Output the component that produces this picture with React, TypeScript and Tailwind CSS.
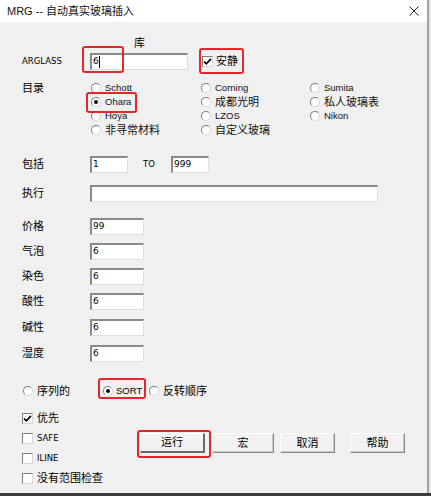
import React from "react";

function Radio({ checked = false }: { checked?: boolean }) {
  return (
    <span className="w-[10px] h-[10px] shrink-0 rounded-full bg-white border border-t-[#7c7c7c] border-l-[#7c7c7c] border-r-[#d6d6d6] border-b-[#d6d6d6] flex items-center justify-center">
      {checked && <span className="w-[4px] h-[4px] rounded-full bg-black" />}
    </span>
  );
}

function Check({ checked = false }: { checked?: boolean }) {
  return (
    <span className="w-[11px] h-[11px] shrink-0 bg-white border border-t-[#7c7c7c] border-l-[#7c7c7c] border-r-[#d6d6d6] border-b-[#d6d6d6] flex items-center justify-center">
      {checked && (
        <svg width="9" height="9" viewBox="0 0 9 9">
          <path d="M1 4.5 L3.3 6.8 L8 1.8" fill="none" stroke="#000" strokeWidth="1.7" />
        </svg>
      )}
    </span>
  );
}

function Field({ w, value = "", caret = false }: { w: string; value?: string; caret?: boolean }) {
  return (
    <div
      className={`${w} h-[17px] shrink-0 bg-white border-t-2 border-l-2 border-r border-b border-t-[#8a8a8a] border-l-[#8a8a8a] border-r-[#dedede] border-b-[#dedede] flex items-center pl-[1px] text-[9px] text-black [font-family:'DejaVu_Sans',sans-serif]`}
    >
      <span>{value}</span>
      {caret && <span className="w-[1px] h-[12px] bg-black" />}
    </div>
  );
}

function RadioItem({ label, checked = false, latin = false }: { label: string; checked?: boolean; latin?: boolean }) {
  return (
    <div className="h-[14px] flex items-center">
      <Radio checked={checked} />
      <span className={`ml-[4px] text-[#111] ${latin ? "text-[9.5px]" : "text-[11px]"}`}>{label}</span>
    </div>
  );
}

function ValueRow({ label, value, mt }: { label: string; value: string; mt: string }) {
  return (
    <div className={`${mt} h-[17px] flex items-center`}>
      <span className="w-[68px] text-[11px]">{label}</span>
      <Field w="w-[54px]" value={value} />
    </div>
  );
}

function Btn({ label, w, def = false }: { label: string; w: string; def?: boolean }) {
  return (
    <div
      className={`${w} h-[20px] flex items-center justify-center text-[11px] bg-[#f2f2f2] border-t border-l border-t-white border-l-white ${
        def ? "border-r-2 border-b-2 border-r-[#6a6a6a] border-b-[#6a6a6a]" : "border-r border-b border-r-[#8a8a8a] border-b-[#8a8a8a] shadow-[inset_-1px_-1px_0_#c8c8c8]"
      }`}
    >
      {label}
    </div>
  );
}

const tahoma = "[font-family:'DejaVu_Sans',sans-serif] text-[8.5px]";

export default function App() {
  return (
    <div className="w-[431px] h-[496px] relative overflow-hidden flex flex-col bg-[#f0f0f0] text-black [font-family:'Liberation_Sans','Noto_Sans_CJK_SC',sans-serif]">
      <div className="flex flex-1 min-h-0">
        <div className="w-[427px] flex flex-col">
          {/* title bar */}
          <div className="h-[22px] bg-white flex items-center justify-between pl-[7px] pr-[8px]">
            <span className="text-[11px] text-[#111]">MRG -- 自动真实玻璃插入</span>
            <svg width="10" height="10" viewBox="0 0 10 10">
              <path d="M0.5 0.5 L9.5 9.5 M9.5 0.5 L0.5 9.5" stroke="#222" strokeWidth="1" />
            </svg>
          </div>

          {/* body */}
          <div className="flex-1 flex flex-col pl-[22px]">
            <div className="mt-[14px] h-[14px] leading-[14px] ml-[112px] text-[11px]">库</div>

            <div className="mt-[3px] h-[17px] flex items-center">
              <span className={`w-[68px] ${tahoma}`}>ARGLASS</span>
              <Field w="w-[98px]" value="6" caret />
              <div className="ml-[14px] flex items-center">
                <Check checked />
                <span className="ml-[3px] text-[11px]">安静</span>
              </div>
            </div>

            <div className="mt-[11px] flex">
              <span className="w-[69px] h-[14px] flex items-center text-[11px]">目录</span>
              <div className="grid grid-cols-[110px_109px_1fr]">
                <RadioItem label="Schott" latin />
                <RadioItem label="Corning" latin />
                <RadioItem label="Sumita" latin />
                <RadioItem label="Ohara" latin checked />
                <RadioItem label="成都光明" />
                <RadioItem label="私人玻璃表" />
                <RadioItem label="Hoya" latin />
                <RadioItem label="LZOS" latin />
                <RadioItem label="Nikon" latin />
                <RadioItem label="非寻常材料" />
                <RadioItem label="自定义玻璃" />
              </div>
            </div>

            <div className="mt-[19px] h-[17px] flex items-center">
              <span className="w-[68px] text-[11px]">包括</span>
              <Field w="w-[38px]" value="1" />
              <span className={`ml-[15px] w-[28px] ${tahoma}`}>TO</span>
              <Field w="w-[38px]" value="999" />
            </div>

            <div className="mt-[12px] h-[17px] flex items-center">
              <span className="w-[68px] text-[11px]">执行</span>
              <Field w="w-[288px]" />
            </div>

            <ValueRow label="价格" value="99" mt="mt-[16px]" />
            <ValueRow label="气泡" value="6" mt="mt-[8px]" />
            <ValueRow label="染色" value="6" mt="mt-[8px]" />
            <ValueRow label="酸性" value="6" mt="mt-[8px]" />
            <ValueRow label="碱性" value="6" mt="mt-[9px]" />
            <ValueRow label="湿度" value="6" mt="mt-[9px]" />

            <div className="mt-[22px] h-[14px] flex items-center">
              <div className="w-[80px] ml-[1px] flex items-center">
                <Radio />
                <span className="ml-[4px] text-[11px]">序列的</span>
              </div>
              <div className="w-[46px] flex items-center">
                <Radio checked />
                <span className="ml-[3px] text-[9.5px]">SORT</span>
              </div>
              <div className="flex items-center">
                <Radio />
                <span className="ml-[4px] text-[11px]">反转顺序</span>
              </div>
            </div>

            <div className="mt-[10px] flex">
              <div className="w-[118px] flex flex-col">
                <div className="h-[20px] flex items-center">
                  <Check checked />
                  <span className="ml-[4px] text-[11px]">优先</span>
                </div>
                <div className="h-[20px] flex items-center">
                  <Check />
                  <span className={`ml-[4px] ${tahoma}`}>SAFE</span>
                </div>
                <div className="h-[20px] flex items-center">
                  <Check />
                  <span className={`ml-[4px] ${tahoma}`}>ILINE</span>
                </div>
                <div className="h-[20px] flex items-center">
                  <Check />
                  <span className="ml-[4px] text-[11px]">没有范围检查</span>
                </div>
              </div>
              <div className="mt-[25px] h-[20px] flex">
                <Btn label="运行" w="w-[65px]" def />
                <div className="ml-[7px]">
                  <Btn label="宏" w="w-[62px]" />
                </div>
                <div className="ml-[6px]">
                  <Btn label="取消" w="w-[55px]" />
                </div>
                <div className="ml-[15px]">
                  <Btn label="帮助" w="w-[55px]" />
                </div>
              </div>
            </div>
          </div>
        </div>
        <div className="w-[2px] bg-[#a2a2a2]" />
        <div className="w-[2px] bg-[#e6e6e6]" />
      </div>
      <div className="h-[3px] bg-[#3c3c3c]" />

      {/* red annotation boxes */}
      <div className="absolute left-[82px] top-[46px] w-[42px] h-[27px] border-2 border-[#e8262a] rounded-[3px]" />
      <div className="absolute left-[199px] top-[48px] w-[45px] h-[26px] border-2 border-[#e8262a] rounded-[3px]" />
      <div className="absolute left-[86px] top-[92px] w-[51px] h-[21px] border-2 border-[#e8262a] rounded-[3px]" />
      <div className="absolute left-[98px] top-[378px] w-[48px] h-[21px] border-2 border-[#e8262a] rounded-[3px]" />
      <div className="absolute left-[137px] top-[430px] w-[74px] h-[28px] border-2 border-[#e8262a] rounded-[3px]" />
    </div>
  );
}
